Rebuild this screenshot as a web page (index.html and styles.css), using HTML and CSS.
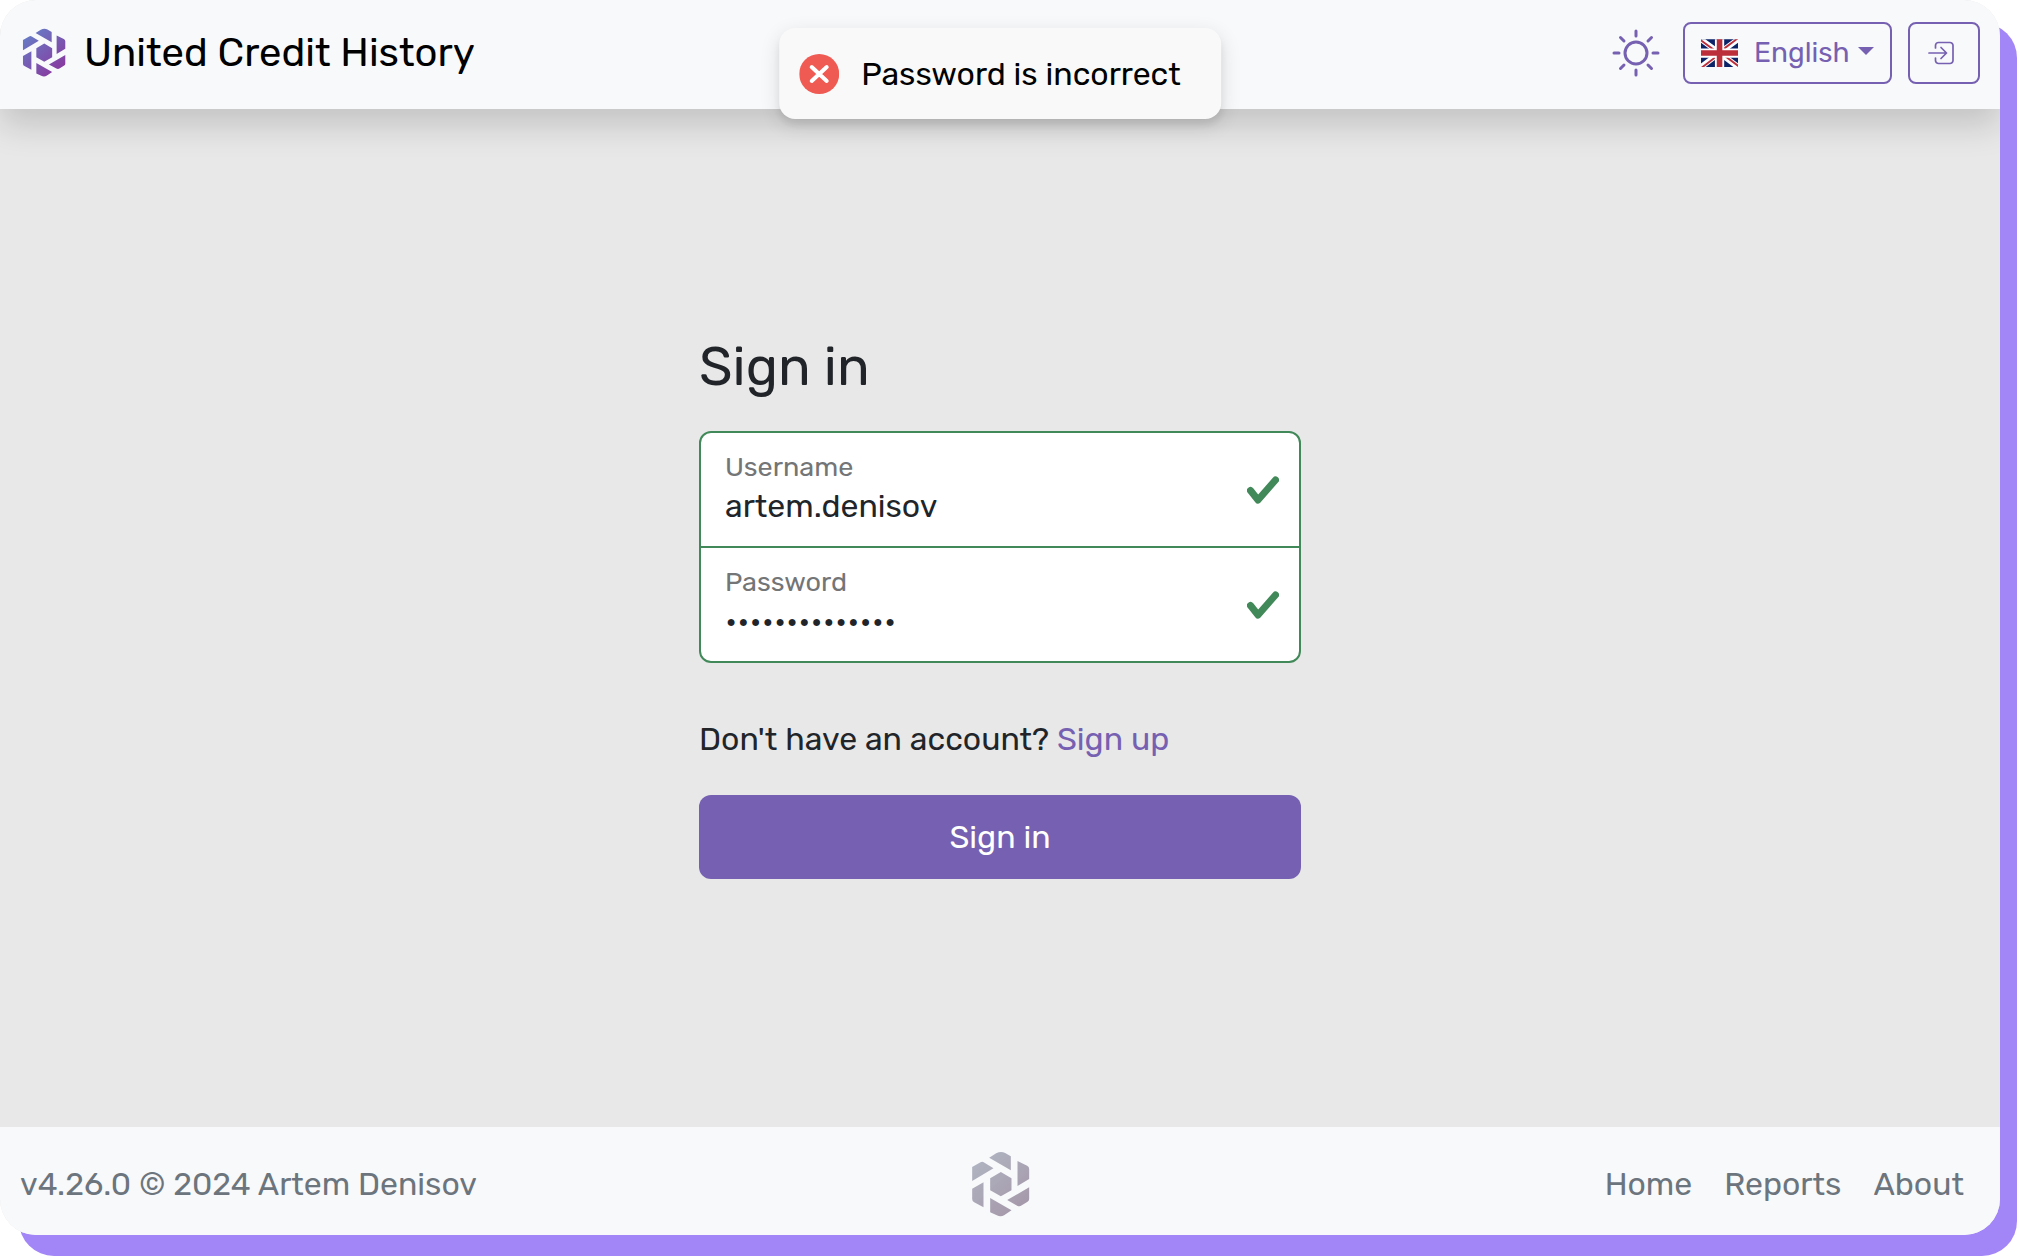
FILE: index.html
```html
<!DOCTYPE html>
<html lang="en">
<head>
<meta charset="utf-8">
<meta name="viewport" content="width=device-width, initial-scale=1">
<title>United Credit History</title>
<link rel="stylesheet" href="styles.css">
</head>
<body>
<svg class="sprite" aria-hidden="true">
  <defs>
    <linearGradient id="brand-gradient" gradientUnits="userSpaceOnUse" x1="75" y1="105" x2="225" y2="275">
      <stop offset="0" stop-color="#6480c8"/>
      <stop offset="1" stop-color="#8b359c"/>
    </linearGradient>
    <symbol id="logo" viewBox="62 92 176 198">
      <path d="M116 112 137 99Q151 92 164 98L181 108V150ZM65 140 90 126Q95 122 102 127L129 144 65 182ZM201 122 230 136Q236 139 236 146V176L201 197ZM151 155 183 174V210L151 228 119 210V174ZM99 186V261L71 246Q65 243 65 236V205ZM119 233 183 270 162 284Q151 291 139 285L119 276ZM236 201V236Q236 242 230 245L214 255Q207 260 200 256L170 239Z"/>
    </symbol>
    <symbol id="check" viewBox="0 0 32 28">
      <path d="M3.500 14.500 11 24 28.500 4" fill="none" stroke="currentColor" stroke-width="7" stroke-linecap="round" stroke-linejoin="round"/>
    </symbol>
  </defs>
</svg>
<div class="shell">
  <header class="topbar">
    <a class="brand" href="#">
      <svg class="brand-logo" aria-hidden="true"><use href="#logo"/></svg>
      <span>United Credit History</span>
    </a>
    <div class="tools">
      <button class="theme" type="button" aria-label="Toggle theme">
        <svg viewBox="0 0 48 48" width="48" height="48" fill="none" stroke="currentColor" stroke-width="3" stroke-linecap="round">
          <circle cx="24" cy="24" r="11"/>
          <path d="M24 2v5M24 41v5M2 24h5M41 24h5M8.500 8.500l3.500 3.500M36 36l3.500 3.500M39.500 8.500 36 12M12 36l-3.500 3.500"/>
        </svg>
      </button>
      <div class="language">
        <svg class="flag" viewBox="0 0 640 480" aria-hidden="true">
          <path fill="#0d2367" d="M0 0h640v480H0z"/>
          <path fill="#fff" d="m75 0 244 181L562 0h78v62L400 241l240 178v61h-80L320 301 81 480H0v-60l239-178L0 64V0z"/>
          <path fill="#bb2e3a" d="m424 281 216 159v40L369 281zm-184 20 6 35L54 480H0zM640 0v3L391 191l2-44L590 0zM0 0l239 176h-60L0 42z"/>
          <path fill="#fff" d="M241 0v480h160V0zM0 160v160h640V160z"/>
          <path fill="#bb2e3a" d="M0 193v96h640v-96zM273 0v480h96V0z"/>
        </svg>
        <select aria-label="Language"><option>English</option></select>
        <svg class="caret" viewBox="0 0 16 8" aria-hidden="true"><path d="M0 0h16L8 8z" fill="currentColor"/></svg>
      </div>
      <button class="enter" type="button" aria-label="Sign in">
        <svg viewBox="0 0 26 24" width="26" height="24" fill="none" stroke="currentColor" stroke-width="1.700" stroke-linecap="round" stroke-linejoin="round">
          <path d="M7.500 7V4.500a3 3 0 0 1 3-3H22a3 3 0 0 1 3 3v15a3 3 0 0 1-3 3H10.500a3 3 0 0 1-3-3V17M1 12h17.500M13 6.500l5.500 5.500-5.500 5.500"/>
        </svg>
      </button>
    </div>
  </header>

  <main class="content">
    <form class="signin">
      <h1>Sign in</h1>
      <div class="fields">
        <div class="field">
          <label for="username">Username</label>
          <input id="username" type="text" value="artem.denisov">
          <svg class="check" aria-hidden="true"><use href="#check"/></svg>
        </div>
        <div class="field">
          <label for="password">Password</label>
          <input id="password" type="password" value="correct-horse1">
          <svg class="check" aria-hidden="true"><use href="#check"/></svg>
        </div>
      </div>
      <p>Don't have an account? <a href="#">Sign up</a></p>
      <button class="submit" type="button">Sign in</button>
    </form>
  </main>

  <footer class="footer">
    <span>v4.26.0 © 2024 Artem Denisov</span>
    <svg class="footer-logo" aria-hidden="true"><use href="#logo"/></svg>
    <nav>
      <a href="#">Home</a>
      <a href="#">Reports</a>
      <a href="#">About</a>
    </nav>
  </footer>

  <div class="toast" role="status">
    <svg viewBox="0 0 40 40" width="40" height="40" aria-hidden="true">
      <circle cx="20" cy="20" r="20" fill="#ef5a53"/>
      <path d="M12.500 13 27.500 27M27.500 13 12.500 27" stroke="#fff" stroke-width="4" stroke-linecap="round"/>
    </svg>
    <span>Password is incorrect</span>
  </div>
</div>
</body>
</html>
```

FILE: styles.css
```css
* { box-sizing: border-box; }

body {
  margin: 0;
  background: #fff;
  color: #212529;
  font: 32px/48px Rubik, Roboto, "Liberation Sans", sans-serif;
}

button, input, select { font: inherit; }
a { text-decoration: none; }

.sprite { position: absolute; width: 0; height: 0; }

.shell {
  position: relative;
  display: flex;
  flex-direction: column;
  min-height: calc(100vh - 23px);
  margin: 0 20px 23px 0;
  overflow: hidden;
  border-radius: 36px;
  background: #e8e8e8;
  box-shadow: 18px 22px 0 -1px #a285f7;
}

.topbar {
  position: relative;
  display: flex;
  align-items: center;
  justify-content: space-between;
  height: 109px;
  padding: 0 20px 4px 22px;
  background: #f8f9fb;
  box-shadow: 0 16px 32px rgba(0, 0, 0, 0.16);
}

.brand {
  display: flex;
  align-items: center;
  gap: 18px;
  color: #000;
  font-size: 40px;
}

.brand-logo { width: 44px; height: 49px; fill: url(#brand-gradient); }

.tools { display: flex; align-items: center; color: #7660b1; }

.theme {
  display: flex;
  margin-right: 23px;
  padding: 0;
  border: 0;
  background: none;
  color: inherit;
}

.language, .enter {
  display: flex;
  align-items: center;
  height: 62px;
  border: 2px solid #7660b1;
  border-radius: 8px;
}

.language { width: 209px; margin-right: 16px; padding: 0 16px; }
.flag { width: 37px; height: 28px; margin-right: 16px; }

.language select {
  flex: 1;
  min-width: 0;
  padding: 0;
  border: 0;
  appearance: none;
  background: none;
  color: inherit;
  font-size: 28px;
}

.caret { width: 16px; height: 8px; margin-bottom: 4px; }

.enter {
  justify-content: center;
  width: 72px;
  padding: 0 6px 0 0;
  background: none;
  color: inherit;
}

.content {
  flex: 1;
  display: flex;
  align-items: center;
  justify-content: center;
  padding: 32px 32px 56px;
}

.signin { width: 100%; max-width: 602px; }

.signin h1 {
  margin: 0 0 30px;
  font-size: 54px;
  font-weight: 400;
  line-height: 68px;
}

.fields {
  border: 2px solid #428959;
  border-radius: 12px;
  background: #fff;
}

.field {
  display: grid;
  grid-template-columns: 1fr auto;
  align-items: center;
  padding: 15px 20px 20px 24px;
}

.field + .field { border-top: 2px solid #428959; }

.field label { color: #737576; font-size: 27px; line-height: 38px; }

.field input {
  grid-row: 2;
  width: 100%;
  height: 40px;
  padding: 0;
  border: 0;
  outline: 0;
  background: none;
  color: inherit;
}

.check {
  grid-column: 2;
  grid-row: 1 / 3;
  width: 32px;
  height: 28px;
  margin-top: 5px;
  color: #428959;
}

.signin p { margin: 52px 0 32px; }
.signin p a { color: #7660b1; }

.submit {
  width: 100%;
  height: 84px;
  border: 0;
  border-radius: 12px;
  background: #7660b1;
  color: #fff;
}

.footer {
  display: grid;
  grid-template-columns: 1fr auto 1fr;
  align-items: center;
  height: 108px;
  padding: 6px 20px 0;
  background: #f8f9fb;
  color: #6c757d;
}

.footer-logo { width: 59px; height: 66px; fill: url(#brand-gradient); filter: grayscale(0.7); opacity: 0.55; }

.footer nav { display: flex; justify-content: flex-end; gap: 32px; padding-right: 16px; }
.footer a { color: inherit; }

.toast {
  position: absolute;
  top: 28px;
  left: 50%;
  display: flex;
  align-items: center;
  gap: 22px;
  height: 91px;
  padding: 0 40px 0 20px;
  transform: translateX(-50%);
  border-radius: 16px;
  background: #f9f9f9;
  color: #000;
  white-space: nowrap;
  box-shadow: 0 6px 20px rgba(0, 0, 0, 0.12), 0 6px 6px rgba(0, 0, 0, 0.06);
}
```
